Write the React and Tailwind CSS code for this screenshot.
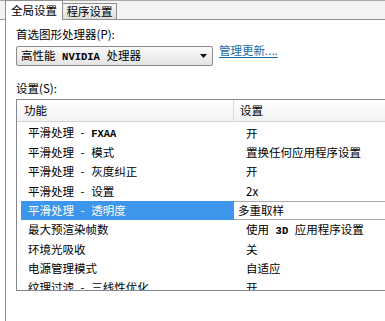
import React from 'react'

const rows = [
  ['平滑处理 - FXAA', '开'],
  ['平滑处理 - 模式', '置换任何应用程序设置'],
  ['平滑处理 - 灰度纠正', '开'],
  ['平滑处理 - 设置', '2x'],
  ['平滑处理 - 透明度', '多重取样', true],
  ['最大预渲染帧数', '使用 3D 应用程序设置'],
  ['环境光吸收', '关'],
  ['电源管理模式', '自适应'],
  ['纹理过滤 - 三线性优化', '开'],
]

function Txt({ text }) {
  // latin bits render narrow like the old bitmap font
  const parts = text.split(/(FXAA|NVIDIA|3D)/)
  return (
    <span className="whitespace-pre [word-spacing:4px]">
      {parts.map((p, i) =>
        /^(FXAA|NVIDIA|3D)$/.test(p) ? (
          <span key={i} className="font-['Liberation_Mono',monospace] font-bold text-[10.5px] [word-spacing:0]">
            {p}
          </span>
        ) : (
          <span key={i}>{p}</span>
        )
      )}
    </span>
  )
}

export default function App() {
  return (
    <div className="w-[385px] h-[321px] bg-white overflow-hidden text-[11.5px] text-black font-['Noto_Sans_CJK_SC',sans-serif] leading-none">
      {/* tabs */}
      <div className="flex h-[20px] bg-[#f3f3f3] border-t border-[#a8a8a8]">
        <div className="w-[5px] border-b border-[#8e8f8f]" />
        <div className="w-[58px] h-[20px] -mt-px bg-white border border-b-0 border-[#8e8f8f] flex items-center justify-center pt-[1px]">
          全局设置
        </div>
        <div className="flex flex-col justify-end">
          <div className="w-[54px] h-[17px] bg-gradient-to-b from-[#f7f7f7] to-[#dedede] border border-l-0 border-[#8e8f8f] flex items-center justify-center">
            程序设置
          </div>
        </div>
        <div className="flex-1 border-b border-[#8e8f8f]" />
      </div>

      {/* panel */}
      <div className="ml-[5px] h-[301px] border-l border-[#8e8f8f] pl-[10px] pt-[8px]">
        <div className="h-[13px] flex items-center">首选图形处理器(P):</div>
        <div className="flex items-start mt-[5px]">
          <div className="w-[197px] h-[20px] rounded-[2px] border border-[#8a8a8a] bg-gradient-to-b from-[#fbfbfb] to-[#e3e3e3] flex items-center pl-[4px] pr-[5px]">
            <span className="flex-1"><Txt text="高性能 NVIDIA 处理器" /></span>
            <svg width="7" height="4" viewBox="0 0 7 4"><path d="M0 0h7L3.5 4z" fill="#111" /></svg>
          </div>
          <span className="ml-[6px] mt-[-1px] text-[#1a6aa3] underline underline-offset-2 [word-spacing:0]">管理更新....</span>
        </div>
        <div className="h-[13px] flex items-center mt-[16px]">设置(S):</div>

        {/* list */}
        <div className="mt-[4px] w-[380px] h-[192px] border border-[#828790] overflow-hidden">
          <div className="flex h-[22px] bg-gradient-to-b from-white to-[#f1f2f4] border-b border-[#d5d5d5]">
            <div className="w-[217px] pl-[7px] flex items-center border-r border-[#d9dbdd]">功能</div>
            <div className="flex-1 pl-[6px] flex items-center">设置</div>
          </div>
          <div className="pt-[2px]">
            {rows.map(([a, b, sel], i) => (
              <div key={i} className="flex h-[19.3px]">
                <div className={`w-[213px] ml-[4px] pl-[7px] flex items-center ${sel ? 'bg-[#3d95ec] text-white' : ''}`}>
                  <Txt text={a} />
                </div>
                {sel ? (
                  <div className="flex-1 flex items-center pl-[4px] border-y border-[#a9a9a9] bg-white">
                    <Txt text={b} />
                  </div>
                ) : (
                  <div className="flex-1 flex items-center pl-[12px]">
                    <Txt text={b} />
                  </div>
                )}
              </div>
            ))}
          </div>
        </div>
      </div>
    </div>
  )
}
